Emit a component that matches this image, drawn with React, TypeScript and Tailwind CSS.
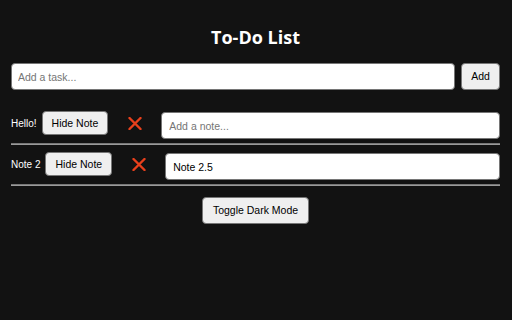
import React from 'react';

const notes = [
  { label: 'Hello!', value: '', placeholder: 'Add a note...' },
  { label: 'Note 2', value: 'Note 2.5', placeholder: 'Add a note...' },
];

const CrossIcon = () => (
  <svg width="14" height="13" viewBox="0 0 14 13" fill="none">
    <path d="M1.5 1 L12.5 12 M12.5 1 L1.5 12" stroke="#e8401c" strokeWidth="2.4" strokeLinecap="round" />
  </svg>
);

const btn =
  'bg-[#efefef] text-black border border-[#767676] rounded-[4px] text-[10.5px] leading-none flex items-center justify-center';

const App = () => {
  return (
    <div className="w-[512px] h-[320px] bg-[#121212] font-['Liberation_Sans',Arial,sans-serif] overflow-hidden">
      <div className="pt-[25px] pl-[11px] pr-[12px] flex flex-col">
        <h1 className="text-center text-white font-bold text-[18px] leading-[24px] font-['Open_Sans',sans-serif]">
          To-Do List
        </h1>

        <div className="mt-[14px] flex gap-[6px]">
          <input
            className="flex-1 h-[27px] bg-white rounded-[4px] border border-[#767676] px-[6px] text-[10.5px] text-black placeholder:text-[#757575] outline-none"
            placeholder="Add a task..."
          />
          <button className={`${btn} w-[39px] h-[27px]`}>Add</button>
        </div>

        <div className="mt-[17px] flex flex-col">
          {notes.map((n, i) => (
            <div key={i} className={i === 0 ? '' : 'mt-[3px]'}>
              <div className="flex items-center h-[32px]">
                <span className="text-white text-[10px]">{n.label}</span>
                <button className={`${btn} ml-[5px] h-[24px] px-[9px]`}>Hide Note</button>
                <div className="w-[53px] flex justify-center items-center">
                  <CrossIcon />
                </div>
                <input
                  className="flex-1 mt-[5px] h-[27px] bg-white rounded-[4px] border border-[#767676] px-[7px] text-[10.5px] text-black placeholder:text-[#757575] outline-none"
                  placeholder={n.placeholder}
                  defaultValue={n.value}
                />
              </div>
              <div className="mt-[4px] border-t border-b border-t-[#777777] border-b-[#9a9a9a]" />
            </div>
          ))}
        </div>

        <div className="mt-[11px] flex justify-center">
          <button className={`${btn} w-[107px] h-[27px]`}>Toggle Dark Mode</button>
        </div>
      </div>
    </div>
  );
};

export default App;
